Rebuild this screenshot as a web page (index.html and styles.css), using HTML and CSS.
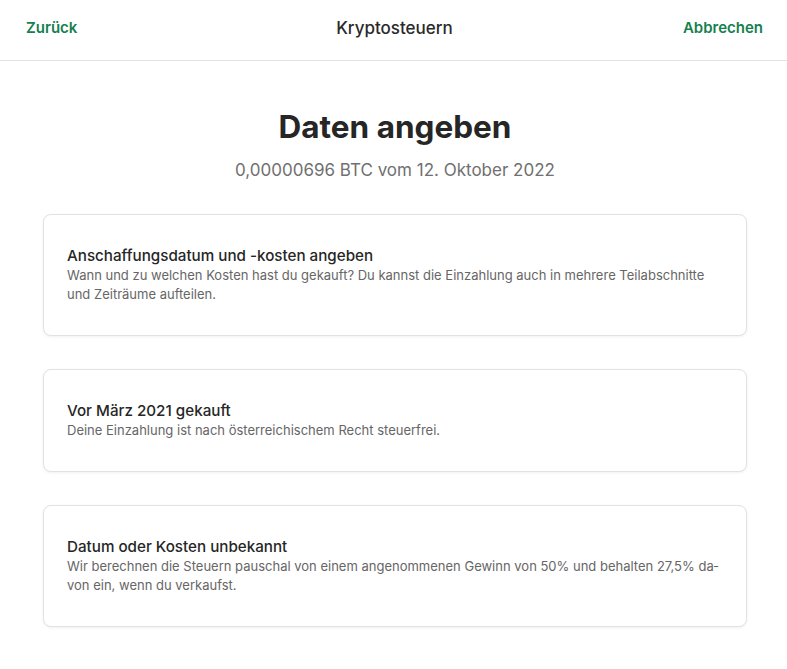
FILE: index.html
```html
<!DOCTYPE html>
<html lang="de">
<head>
<meta charset="utf-8">
<link rel="stylesheet" href="styles.css">
</head>
<body>
<header class="topbar">
  <a class="nav-link nav-left">Zurück</a>
  <div class="topbar-title">Kryptosteuern</div>
  <a class="nav-link nav-right">Abbrechen</a>
</header>
<main class="content">
  <h1 class="page-title">Daten angeben</h1>
  <p class="page-sub">0,00000696 BTC vom 12. Oktober 2022</p>
  <div class="cards">
    <div class="card">
      <div class="card-title">Anschaffungsdatum und -kosten angeben</div>
      <div class="card-desc">Wann und zu welchen Kosten hast du gekauft? Du kannst die Einzahlung auch in mehrere Teilabschnitte und Zeiträume aufteilen.</div>
    </div>
    <div class="card">
      <div class="card-title">Vor März 2021 gekauft</div>
      <div class="card-desc">Deine Einzahlung ist nach österreichischem Recht steuerfrei.</div>
    </div>
    <div class="card">
      <div class="card-title">Datum oder Kosten unbekannt</div>
      <div class="card-desc">Wir berechnen die Steuern pauschal von einem angenommenen Gewinn von 50% und behalten 27,5% da&shy;von ein, wenn du verkaufst.</div>
    </div>
  </div>
</main>
</body>
</html>
```
FILE: styles.css
```css
* { box-sizing: border-box; }
html, body { margin: 0; padding: 0; background: #fff; }
body {
  font-family: Inter, "Noto Sans", sans-serif;
  color: #2a2a2a;
}
.topbar {
  height: 61px;
  border-bottom: 1px solid #e3e3e3;
  display: grid;
  grid-template-columns: 1fr auto 1fr;
  align-items: center;
  padding: 0 24px 5px 26px;
}
.nav-link {
  color: #16804f;
  font-weight: 600;
  font-size: 15px;
  text-decoration: none;
}
.nav-left { justify-self: start; }
.nav-right { justify-self: end; }
.topbar-title {
  font-size: 17px;
  font-weight: 500;
  color: #2a2a2a;
}
.content {
  padding: 46px 40px 40px 43px;
  display: flex;
  flex-direction: column;
  align-items: center;
}
.page-title {
  margin: 0;
  font-size: 31.5px;
  font-weight: 700;
  line-height: 40px;
  color: #262626;
}
.page-sub {
  margin: 12px 0 0 0;
  font-size: 17px;
  line-height: 22px;
  color: #707070;
}
.cards {
  margin-top: 33px;
  width: 100%;
  display: flex;
  flex-direction: column;
  gap: 33px;
}
.card {
  border: 1px solid #e2e2e2;
  border-radius: 8px;
  padding: 31px 23px;
  box-shadow: 0 1px 3px rgba(0,0,0,0.06);
  background: #fff;
}
.card-title {
  font-size: 15.2px;
  font-weight: 500;
  line-height: 20px;
  color: #262626;
}
.card-desc {
  font-size: 13px;
  line-height: 19px;
  color: #666;
  hyphens: manual;
}
```
